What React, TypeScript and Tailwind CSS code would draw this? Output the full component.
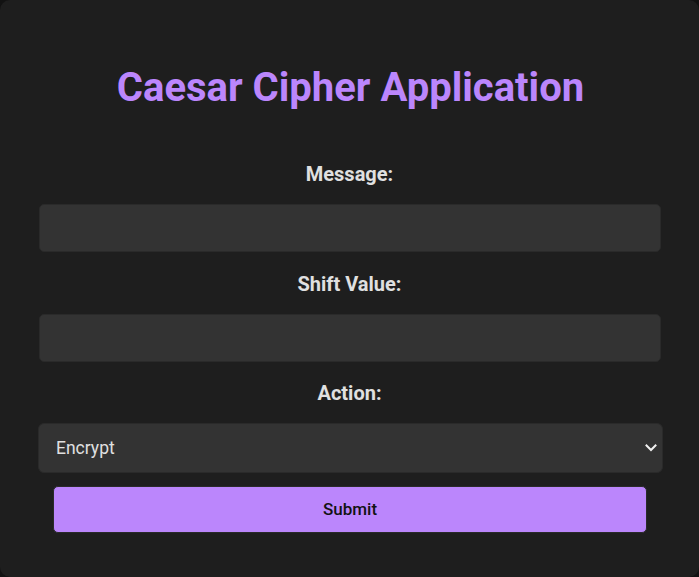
import React from "react";

export default function App() {
  return (
    <div className="w-[699px] h-[577px] bg-[#121212]" style={{ fontFamily: "Roboto, 'Noto Sans', sans-serif" }}>
      <div className="w-full h-full bg-[#1e1e1e] rounded-[10px] flex flex-col items-center pt-[64px]">
        <h1 className="text-[40px] leading-[48px] font-bold text-[#bb86fc] m-0 ml-[2px]">Caesar Cipher Application</h1>
        <div className="flex flex-col items-center w-full mt-[48px]">
          <label className="text-[20px] leading-[28px] font-bold text-[#e0e0e0] mb-[16px]">Message:</label>
          <input
            type="text"
            className="w-[622px] h-[48px] bg-[#333333] border border-[#2a2a2a] rounded-[5px] outline-none text-[#e0e0e0] px-3 ml-[1px]"
          />
          <label className="text-[20px] leading-[28px] font-bold text-[#e0e0e0] mt-[18px] mb-[16px]">Shift Value:</label>
          <input
            type="text"
            className="w-[622px] h-[48px] bg-[#333333] border border-[#2a2a2a] rounded-[5px] outline-none text-[#e0e0e0] px-3 ml-[1px]"
          />
          <label className="text-[20px] leading-[28px] font-bold text-[#e0e0e0] mt-[17px] mb-[16px]">Action:</label>
          <div className="relative w-[625px] h-[50px] ml-[2px]">
            <select
              defaultValue="encrypt"
              className="appearance-none w-full h-full bg-[#333333] border border-[#2a2a2a] rounded-[6px] outline-none text-[#e0e0e0] text-[17.5px] pl-[17px]"
            >
              <option value="encrypt">Encrypt</option>
              <option value="decrypt">Decrypt</option>
            </select>
            <svg
              className="absolute right-[6px] top-[20px] pointer-events-none"
              width="12"
              height="10"
              viewBox="0 0 12 10"
              fill="none"
            >
              <path d="M1.5 2.5 L6 7 L10.5 2.5" stroke="#f0f0f0" strokeWidth="2" strokeLinecap="square" />
            </svg>
          </div>
          <button className="mt-[13px] w-[594px] h-[47px] bg-[#bb86fc] border border-[#2a2a2a] rounded-[5px] text-[17px] font-medium text-[#121212] ml-[1px]">
            Submit
          </button>
        </div>
      </div>
    </div>
  );
}
